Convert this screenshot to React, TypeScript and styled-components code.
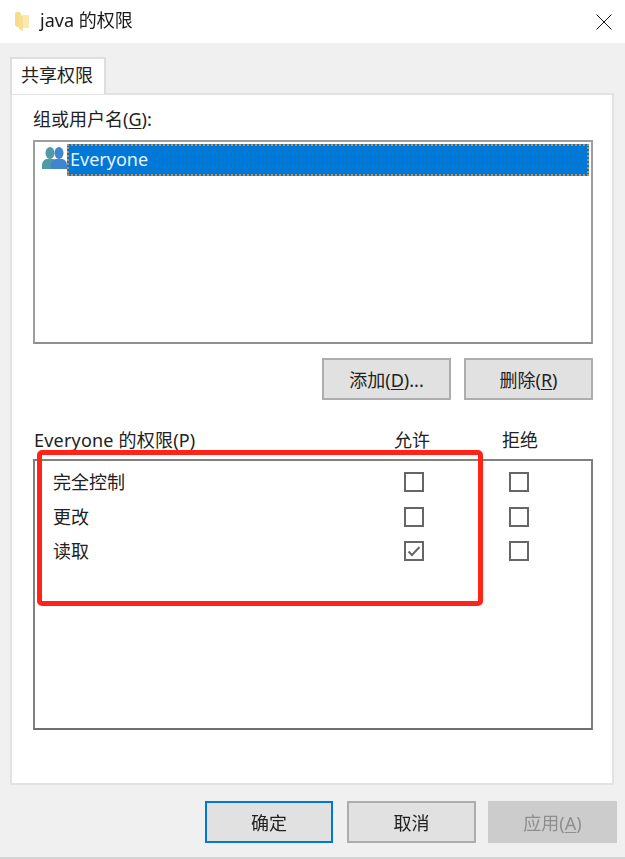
import React from "react";
import styled, { createGlobalStyle } from "styled-components";

const Global = createGlobalStyle`
  html, body { margin: 0; padding: 0; background: #f0f0f0; }
  body { font-family: "Noto Sans", "Noto Sans CJK SC", sans-serif; font-size: 18px; color: #222; }
  * { box-sizing: border-box; }
`;

const Dialog = styled.div`
  position: relative;
  width: 625px;
  height: 859px;
  display: flex;
  flex-direction: column;
  background: #f0f0f0;
  border-bottom: 2px solid #d4d4d4;
  overflow: hidden;
`;

const TitleBar = styled.header`
  height: 43px;
  flex: none;
  background: #fff;
  display: flex;
  align-items: center;
  padding: 0 13px 0 15px;
  gap: 11px;
`;

const TitleText = styled.span`
  flex: 1;
  line-height: 40px;
  height: 43px;
  color: #1a1a1a;
  filter: blur(0.35px);
`;

const Content = styled.main`
  flex: 1;
  display: flex;
  flex-direction: column;
  padding: 14px 10px 0;
  filter: blur(0.35px);
`;

const TabStrip = styled.div`
  display: flex;
  height: 37px;
  flex: none;
  position: relative;
  z-index: 1;
`;

const Tab = styled.div`
  width: 96px;
  height: 37px;
  background: #fff;
  border: 2px solid #dedede;
  border-bottom: none;
  padding-right: 2px;
  text-align: center;
  line-height: 33px;
`;

const Panel = styled.section`
  height: 692px;
  margin-top: -1px;
  margin-right: 1px;
  background: #fff;
  border: 2px solid #e2e2e2;
  padding: 11px 19px 0 21px;
  display: flex;
  flex-direction: column;
`;

const FieldLabel = styled.label`
  height: 34px;
  line-height: 26px;
  u { text-underline-offset: 2px; }
`;

const ListBox = styled.div`
  height: 204px;
  border: 2px solid #9e9e9e;
  border-bottom-color: #8f8f8f;
  padding: 2px 2px 0 7px;
  display: flex;
  align-items: flex-start;
`;

const GroupIcon = styled.svg`
  width: 25px;
  height: 24px;
  flex: none;
  margin-top: 2px;
`;

const SelectedRow = styled.div`
  flex: 1;
  height: 32px;
  background: #0078d7;
  color: #e8f3fd;
  line-height: 30px;
  padding-left: 3px;
  outline: 2px dotted #c98a4a;
  outline-offset: -2px;
`;

const ActionRow = styled.div`
  display: flex;
  justify-content: flex-end;
  gap: 13px;
  margin-top: 14px;
`;

const Button = styled.button<{ $primary?: boolean; $disabled?: boolean }>`
  width: ${(p) => (p.$primary ? "128px" : "129px")};
  height: 42px;
  padding: 0;
  font: inherit;
  color: ${(p) => (p.$disabled ? "#8e8e8e" : "#222")};
  background: ${(p) => (p.$disabled ? "#cccccc" : "#e1e1e1")};
  border: ${(p) =>
    p.$primary ? "2px solid #0078d7" : p.$disabled ? "2px solid #cccccc" : "2px solid #adadad"};
  u { text-underline-offset: 2px; }
`;

const PermHeader = styled.div`
  display: grid;
  grid-template-columns: 1fr 36px 72px 36px 55px;
  height: 24px;
  margin-top: 27px;
  padding-left: 1px;
  line-height: 26px;
`;

const PermTitle = styled.span`
  letter-spacing: 0.2px;
`;

const HeaderCell = styled.span`
  text-align: center;
  white-space: nowrap;
`;

const PermBox = styled.div`
  height: 271px;
  margin-top: 8px;
  border: 2px solid #808080;
  border-bottom-color: #6f6f6f;
  padding: 4px 0 0 18px;
  display: flex;
  flex-direction: column;
`;

const PermRow = styled.div`
  display: grid;
  grid-template-columns: 1fr 20px 85px 20px 62px;
  align-items: center;
  height: 34.5px;
`;

const PermName = styled.span`
  line-height: 28px;
`;

const Check = styled.span`
  width: 20px;
  height: 20px;
  border: 2px solid #666;
  background: #fff;
  display: flex;
  align-items: center;
  justify-content: center;
`;

const CheckMark = styled.svg`
  width: 14px;
  height: 14px;
`;

const Footer = styled.footer`
  display: flex;
  justify-content: flex-end;
  gap: 14px;
  margin-right: -2px;
  padding-top: 16px;
  button:last-child { margin-left: -2px; }
`;

const Highlight = styled.div`
  position: absolute;
  left: 37px;
  top: 450px;
  width: 446px;
  height: 156px;
  border: 5px solid #ff2318;
  border-radius: 5px;
  pointer-events: none;
`;

const CloseIcon = () => (
  <svg width="16" height="16" viewBox="0 0 16 16" aria-hidden>
    <path d="M0.5 0.5 L15.5 15.5 M15.5 0.5 L0.5 15.5" stroke="#111" strokeWidth="1" fill="none" />
  </svg>
);

const FolderIcon = () => (
  <svg width="14" height="19" viewBox="0 0 14 19" aria-hidden>
    <path d="M0 1.5 Q0 0 1.5 0 H5 L6 2 V16 L0 14 Z" fill="#f6dc86" />
    <path d="M4 3 H13 Q14 3 14 4 V15 Q14 16 13 16 H8 L8 19 L4 17 Z" fill="#fde9b0" />
    <path d="M4 3 L8 4.5 V19 L4 17 Z" fill="#f9df95" />
  </svg>
);

const Person = ({ x, fill }: { x: number; fill: string }) => (
  <g fill={fill}>
    <ellipse cx={x} cy={7} rx={4.5} ry={6} />
    <path d={`M${x - 8} 23 Q${x - 9} 14 ${x - 3} 13 H${x + 3} Q${x + 9} 14 ${x + 8} 23 Z`} />
  </g>
);

const rows = [
  { name: "完全控制", allow: false },
  { name: "更改", allow: false },
  { name: "读取", allow: true },
];

export default function App() {
  return (
    <Dialog>
      <Global />
      <TitleBar>
        <FolderIcon />
        <TitleText>java 的权限</TitleText>
        <CloseIcon />
      </TitleBar>
      <Content>
        <TabStrip>
          <Tab>共享权限</Tab>
        </TabStrip>
        <Panel>
          <FieldLabel>
            组或用户名(<u>G</u>):
          </FieldLabel>
          <ListBox>
            <GroupIcon viewBox="0 0 25 24" aria-hidden>
              <Person x={8} fill="#4f9aa6" />
              <Person x={17} fill="#3f86cf" />
            </GroupIcon>
            <SelectedRow>Everyone</SelectedRow>
          </ListBox>
          <ActionRow>
            <Button>
              添加(<u>D</u>)...
            </Button>
            <Button>
              删除(<u>R</u>)
            </Button>
          </ActionRow>
          <PermHeader>
            <PermTitle>Everyone 的权限(P)</PermTitle>
            <HeaderCell>允许</HeaderCell>
            <span />
            <HeaderCell>拒绝</HeaderCell>
            <span />
          </PermHeader>
          <PermBox>
            {rows.map((r) => (
              <PermRow key={r.name}>
                <PermName>{r.name}</PermName>
                <Check>
                  {r.allow && (
                    <CheckMark viewBox="0 0 14 14" aria-hidden>
                      <path d="M1.5 7.5 L5 11 L12.5 3" stroke="#666" strokeWidth="2" fill="none" />
                    </CheckMark>
                  )}
                </Check>
                <span />
                <Check />
                <span />
              </PermRow>
            ))}
          </PermBox>
        </Panel>
        <Footer>
          <Button $primary>确定</Button>
          <Button>取消</Button>
          <Button $disabled>
            应用(<u>A</u>)
          </Button>
        </Footer>
      </Content>
      <Highlight />
    </Dialog>
  );
}
